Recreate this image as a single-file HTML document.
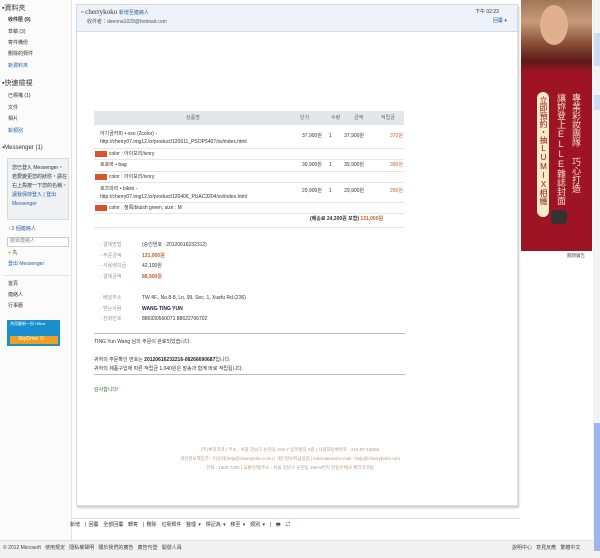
<!DOCTYPE html>
<html><head><meta charset="utf-8"><style>
*{margin:0;padding:0;box-sizing:border-box}
body{width:600px;height:558px;overflow:hidden;background:#fff;font-family:"Liberation Sans","Noto Sans CJK TC","Noto Sans CJK KR",sans-serif;color:#333;position:relative;font-size:5px}
.a{position:absolute;white-space:nowrap;line-height:1}
.s{font-size:5px}
.lk{color:#2a5d9c}
.or{color:#c8602a}
.hr{position:absolute;height:1px;background:#bbb}
.tag{position:absolute;width:12px;height:6px;background:#d9532c}
.v{writing-mode:vertical-rl;text-orientation:upright}
</style></head><body>
<!-- sidebar -->
<div class="a" style="left:0;top:0;width:72px;height:540px;background:#fbfbfb"></div>
<div class="a" style="left:71px;top:0;width:1px;height:540px;background:#e3e3e3"></div>
<div class="a" style="left:2px;top:5px;font-size:7px">▪資料夾</div>
<div class="a s" style="left:8px;top:18px;font-weight:bold">收件匣 (9)</div>
<div class="a s" style="left:8px;top:30px">草稿 (3)</div>
<div class="a s" style="left:8px;top:41px">寄件備份</div>
<div class="a s" style="left:8px;top:52px">刪除的郵件</div>
<div class="a s lk" style="left:8px;top:64px">新資料夾</div>
<div class="a" style="left:2px;top:80px;font-size:7px">▪快速檢視</div>
<div class="a s" style="left:8px;top:94px">已標幟 (1)</div>
<div class="a s" style="left:8px;top:106px">文件</div>
<div class="a s" style="left:8px;top:117px">相片</div>
<div class="a s lk" style="left:8px;top:129px">新類別</div>
<div class="a" style="left:2px;top:145px;font-size:6px">▪Messenger (1)</div>
<div class="a" style="left:7px;top:158px;width:62px;height:62px;background:#eef2f4;border:1px solid #d6dde2"></div>
<div class="a s" style="left:12px;top:164px;line-height:9px;white-space:normal;width:55px">您已登入 Messenger。若要變更您的狀態，請在右上角按一下您的名稱。<span class="lk">讓我保持登入 | 登出 Messenger</span></div>
<div class="a s lk" style="left:8px;top:227px">♁2 個連絡人</div>
<div class="a" style="left:7px;top:237px;width:62px;height:10px;border:1px solid #ccc;background:#fff"></div>
<div class="a s" style="left:10px;top:239px;color:#888">搜尋連絡人</div>
<div class="a s" style="left:8px;top:251px"><span style="color:#e0b020">●</span> 丸</div>
<div class="a s lk" style="left:8px;top:262px">登出 Messenger</div>
<div class="a" style="left:4px;top:275px;width:66px;height:1px;background:#e3e3e3"></div>
<div class="a s" style="left:8px;top:282px">首頁</div>
<div class="a s" style="left:8px;top:293px">連絡人</div>
<div class="a s" style="left:8px;top:304px">行事曆</div>
<div class="a" style="left:7px;top:320px;width:53px;height:26px;background:#1a8fd0"></div>
<div class="a" style="left:10px;top:336px;width:48px;height:8px;background:#f0a020"></div>
<div class="a" style="left:10px;top:322px;font-size:4px;color:#fff">共用最新一份 Office</div>
<div class="a" style="left:18px;top:337px;font-size:5px;color:#fff">SkyDrive ⊙</div>

<!-- main card -->
<div class="a" style="left:76px;top:4px;width:442px;height:502px;background:#fff;border:1px solid #ddd;box-shadow:1px 2px 2px #ccc"></div>
<div class="a" style="left:76px;top:4px;width:442px;height:28px;background:#eef3fa;border:1px solid #d3dbe7"></div>
<div class="a" style="left:81px;top:9px;font-size:7px;font-family:'Liberation Serif',serif">▫ cherrykoko <span class="lk" style="font-size:5px;font-family:'Liberation Sans','Noto Sans CJK TC',sans-serif">新增至連絡人</span></div>
<div class="a s" style="left:87px;top:20px;color:#555">收件者：deenna1029@hotmail.com</div>
<div class="a s" style="left:475px;top:10px">下午 02:23</div>
<div class="a s lk" style="left:493px;top:19px">回覆 ▾</div>

<!-- table -->
<div class="a" style="left:94px;top:111px;width:310px;height:14px;background:#e3e7ed"></div>
<div class="a s" style="left:186px;top:116px;color:#666">상품명</div>
<div class="a s" style="left:300px;top:116px;color:#666">단가</div>
<div class="a s" style="left:331px;top:116px;color:#666">수량</div>
<div class="a s" style="left:354px;top:116px;color:#666">금액</div>
<div class="a s" style="left:381px;top:116px;color:#666">적립금</div>

<div class="a s" style="left:100px;top:130px;line-height:8px">아기곰커피 • oso (2color) -<br>http://cherry07.img12.kr/product/120611_PSOP5407/sv/index.html</div>
<div class="a s" style="left:302px;top:134px">37,900원 &nbsp; &nbsp; 1 &nbsp; &nbsp; &nbsp; &nbsp; 37,900원</div>
<div class="a s or" style="left:390px;top:134px">370원</div>
<div class="hr" style="left:94px;top:148px;width:310px;background:#e5e5e5"></div>
<div class="tag" style="left:95px;top:151px"></div>
<div class="a s" style="left:109px;top:152px">color : 아이보리/ivory</div>
<div class="hr" style="left:94px;top:159px;width:310px;background:#e5e5e5"></div>
<div class="a s" style="left:100px;top:163px">호호바 • bag</div>
<div class="a s" style="left:302px;top:163px">39,900원 &nbsp; &nbsp; 1 &nbsp; &nbsp; &nbsp; &nbsp; 39,900원</div>
<div class="a s or" style="left:390px;top:163px">390원</div>
<div class="hr" style="left:94px;top:171px;width:310px;background:#e5e5e5"></div>
<div class="tag" style="left:95px;top:174px"></div>
<div class="a s" style="left:109px;top:175px">color : 아이보리/ivory</div>
<div class="hr" style="left:94px;top:182px;width:310px;background:#e5e5e5"></div>
<div class="a s" style="left:100px;top:185px;line-height:8px">로즈마리 • bikini -<br>http://cherry07.img12.kr/product/120406_PUAC3204/sv/index.html</div>
<div class="a s" style="left:302px;top:189px">29,900원 &nbsp; &nbsp; 1 &nbsp; &nbsp; &nbsp; &nbsp; 29,900원</div>
<div class="a s or" style="left:390px;top:189px">290원</div>
<div class="hr" style="left:94px;top:202px;width:310px;background:#e5e5e5"></div>
<div class="tag" style="left:95px;top:205px"></div>
<div class="a s" style="left:109px;top:206px">color : 청록/bluish green, size : M</div>
<div class="hr" style="left:94px;top:213px;width:310px;background:#e5e5e5"></div>
<div class="a s" style="left:310px;top:217px;font-weight:bold">(배송료 24,300원 포함) <span class="or">131,000원</span></div>
<div class="hr" style="left:94px;top:227px;width:310px;background:#e5e5e5"></div>

<div class="a s" style="left:100px;top:240px;color:#999;line-height:10.5px">- 결제방법<br>- 주문금액<br>- 사용배치금<br>- 결제금액</div>
<div class="a s" style="left:142px;top:240px;line-height:10.5px">(승인번호 : 20120616232312)<br><b class="or">131,000원</b><br>42,100원<br><b class="or">88,900원</b></div>
<div class="a s" style="left:100px;top:293px;color:#999;line-height:10.5px">- 배달주소<br>- 받는사람<br>- 전화번호</div>
<div class="a s" style="left:142px;top:293px;line-height:10.5px">TW 4F., No.8-8, Ln. 99, Sec. 1, Xuefu Rd.(236)<br><b style="color:#224">WANG TING YUN</b><br>886930560071 88622706702</div>
<div class="hr" style="left:94px;top:333px;width:311px"></div>
<div class="a s" style="left:94px;top:340px">TING Yun Wang 님의 주문이 완료되었습니다.</div>
<div class="a s" style="left:94px;top:356px;line-height:9px">귀하의 주문확인 번호는 <b style="color:#223">20120616232216-08266690687</b>입니다.<br>귀하의 제품구입에 따른 적립금 1,040원은 발송과 함께 바로 적립됩니다.</div>
<div class="hr" style="left:94px;top:374px;width:311px"></div>
<div class="a s" style="left:94px;top:388px;color:#3a6a3a">감사합니다!</div>

<div class="a" style="left:120px;top:445px;width:340px;text-align:center;font-size:4.5px;color:#b59a82;line-height:9px">(주)체리코코 | 주소 : 서울 강남구 논현동 215-7 삼목빌딩 3층 | 사업자등록번호 : 215-87-15506<br>개인정보책임자 : 이승화(help@cherrykoko.com) | 개인정보취급방침 | international e-mail : help@cherrykoko.com<br>전화 : 1600-7260 | 교환/반품주소 : 서울 강남구 논현동 208-9번지 한웅우체국 체리코코팀</div>

<!-- toolbar -->
<div class="a" style="left:72px;top:518px;width:448px;height:1px;background:#ddd"></div>
<div class="a s" style="left:70px;top:523px;word-spacing:1px">新增 &nbsp;| 回覆 &nbsp;全部回覆 &nbsp;轉寄 &nbsp;| 刪除 &nbsp;垃圾郵件 &nbsp;整理 ▾ &nbsp;標記為 ▾ &nbsp;移至 ▾ &nbsp;類別 ▾ &nbsp;| &nbsp;🖶 &nbsp;<span class="lk">⇄</span></div>

<!-- ad -->
<div class="a" style="left:521px;top:0;width:71px;height:251px;background:#9e1424"></div>
<div class="a" style="left:521px;top:0;width:71px;height:72px;background:linear-gradient(180deg,#a07858 0%,#c89a7a 30%,#8a5038 60%,#5a1a18 85%,#9e1424 100%)"></div>
<div class="a" style="left:540px;top:5px;width:28px;height:40px;border-radius:50%;background:#e0b090"></div>
<div class="a v" style="left:571px;top:93px;font-size:9px;line-height:10px;color:#f3e3c8">專業彩妝團隊 巧心打造</div>
<div class="a v" style="left:556px;top:93px;font-size:9px;line-height:10px;color:#f3e3c8">讓妳登上ELLE雜誌封面</div>
<div class="a" style="left:537px;top:92px;width:12px;height:125px;border-radius:6px;background:#f5edc8"></div>
<div class="a v" style="left:538px;top:96px;font-size:8px;line-height:10px;color:#9e1424">立即預約・抽LUMIX相機</div>
<div class="a" style="left:551px;top:210px;width:16px;height:14px;border-radius:4px;background:#333"></div>
<div class="a" style="left:567px;top:254px;font-size:4.5px;color:#555">關閉廣告</div>

<!-- scrollbar -->
<div class="a" style="left:593px;top:0;width:7px;height:558px;background:#f3f3f3"></div>
<div class="a" style="left:594px;top:33px;width:6px;height:33px;background:#cfdcf5"></div>
<div class="a" style="left:594px;top:95px;width:6px;height:15px;background:#cfdcf5"></div>
<div class="a" style="left:594px;top:423px;width:6px;height:128px;background:#9db7ee"></div>

<!-- footer -->
<div class="a" style="left:0;top:540px;width:593px;height:18px;background:#f1f1f1;border-top:1px solid #e0e0e0"></div>
<div class="a s" style="left:3px;top:546px;color:#444">© 2012 Microsoft &nbsp; 使用規定 &nbsp; 隱私權聲明 &nbsp; 關於我們的廣告 &nbsp; 廣告刊登 &nbsp; 開發人員</div>
<div class="a s" style="left:512px;top:546px;color:#444">說明中心 &nbsp; 意見反應 &nbsp; 繁體中文</div>
</body></html>
